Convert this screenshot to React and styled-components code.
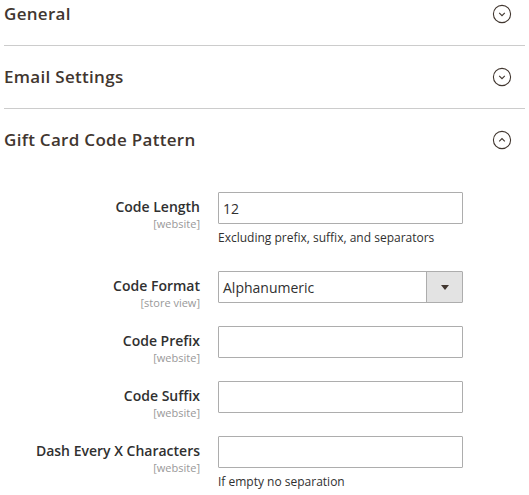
import React from "react";
import styled, { createGlobalStyle } from "styled-components";

const GlobalStyle = createGlobalStyle`
  body {
    margin: 0;
    background: #fff;
    font-family: "Open Sans", "Liberation Sans", sans-serif;
    color: #303030;
  }
`;

const Page = styled.div`
  margin-top: -17px;
  padding: 0 4px;
  width: 521px;
`;

const Section = styled.section`
  border-bottom: ${(p) => (p.last ? "none" : "1px solid #cccccc")};
`;

const SectionHeader = styled.div`
  display: flex;
  align-items: center;
  justify-content: space-between;
  padding: 20px 13px 20px 0;
`;

const SectionTitle = styled.h3`
  margin: 0;
  font-size: 17px;
  line-height: 22px;
  font-weight: 600;
  letter-spacing: 0.3px;
  color: #41362f;
`;

const Fieldset = styled.div`
  padding-top: 21px;
  display: flex;
  flex-direction: column;
  gap: 23px;
`;

const Row = styled.div`
  display: grid;
  grid-template-columns: 196px 245px;
  column-gap: 18px;
  align-items: start;
`;

const LabelCol = styled.div`
  text-align: right;
  padding-top: 6px;
  margin-bottom: -8px;
`;

const Label = styled.div`
  font-size: 14px;
  font-weight: 600;
  line-height: 18px;
  color: #303030;
`;

const Scope = styled.div`
  font-size: 11px;
  line-height: 16px;
  color: #999999;
`;

const Control = styled.div`
  display: flex;
  flex-direction: column;
`;

const Input = styled.input`
  box-sizing: border-box;
  width: 245px;
  height: 32px;
  border: 1px solid #adadad;
  border-radius: 1px;
  padding: 0 4px;
  font-family: inherit;
  font-size: 14px;
  color: #303030;
  background: #fff;
  outline: none;
`;

const SelectBox = styled.div`
  box-sizing: border-box;
  width: 245px;
  height: 32px;
  border: 1px solid #adadad;
  border-radius: 1px;
  display: flex;
  align-items: stretch;
`;

const SelectValue = styled.div`
  flex: 1;
  display: flex;
  align-items: center;
  padding-left: 4px;
  font-size: 14px;
  color: #303030;
`;

const SelectButton = styled.div`
  width: 35px;
  border-left: 1px solid #adadad;
  background: #e3e3e3;
  display: flex;
  align-items: center;
  justify-content: center;
`;

const Arrow = styled.span`
  width: 0;
  height: 0;
  border-left: 4px solid transparent;
  border-right: 4px solid transparent;
  border-top: 5px solid #41362f;
  margin-top: 1px;
`;

const Note = styled.div`
  margin-top: 4px;
  font-size: 12px;
  line-height: 20px;
  color: #303030;
`;

const ToggleIcon = ({ open }) => (
  <svg width="20" height="20" viewBox="0 0 20 20">
    <circle cx="10" cy="10" r="8.6" fill="none" stroke="#41362f" strokeWidth="1.1" />
    <path
      d={open ? "M7.2 11.3 L10 8.5 L12.8 11.3" : "M7.2 8.8 L10 11.6 L12.8 8.8"}
      fill="none"
      stroke="#41362f"
      strokeWidth="1.1"
    />
  </svg>
);

const Field = ({ label, scope, note, children }) => (
  <Row>
    <LabelCol>
      <Label>{label}</Label>
      <Scope>{scope}</Scope>
    </LabelCol>
    <Control>
      {children}
      {note && <Note>{note}</Note>}
    </Control>
  </Row>
);

export default function App() {
  return (
    <Page>
      <GlobalStyle />
      <Section>
        <SectionHeader>
          <SectionTitle>General</SectionTitle>
          <ToggleIcon />
        </SectionHeader>
      </Section>
      <Section>
        <SectionHeader>
          <SectionTitle>Email Settings</SectionTitle>
          <ToggleIcon />
        </SectionHeader>
      </Section>
      <Section last>
        <SectionHeader>
          <SectionTitle>Gift Card Code Pattern</SectionTitle>
          <ToggleIcon open />
        </SectionHeader>
        <Fieldset>
          <Field label="Code Length" scope="[website]" note="Excluding prefix, suffix, and separators">
            <Input defaultValue="12" />
          </Field>
          <Field label="Code Format" scope="[store view]">
            <SelectBox>
              <SelectValue>Alphanumeric</SelectValue>
              <SelectButton>
                <Arrow />
              </SelectButton>
            </SelectBox>
          </Field>
          <Field label="Code Prefix" scope="[website]">
            <Input />
          </Field>
          <Field label="Code Suffix" scope="[website]">
            <Input />
          </Field>
          <Field label="Dash Every X Characters" scope="[website]" note="If empty no separation">
            <Input />
          </Field>
        </Fieldset>
      </Section>
    </Page>
  );
}
